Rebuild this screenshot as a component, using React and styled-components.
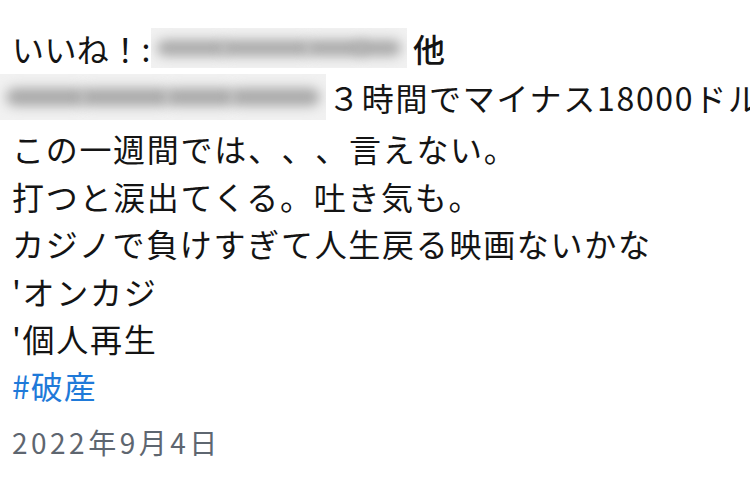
import React from "react";
import styled, { createGlobalStyle } from "styled-components";

const GlobalStyle = createGlobalStyle`
  html, body {
    margin: 0;
    padding: 0;
    background: #ffffff;
  }
  body {
    font-family: "Noto Sans CJK JP", "Noto Sans", sans-serif;
  }
`;

const Page = styled.div`
  width: 750px;
  height: 500px;
  overflow: hidden;
  box-sizing: border-box;
  padding: 24px 0 0 12px;
  color: #141414;
  text-spacing-trim: space-all;
`;

const Line = styled.div`
  display: flex;
  align-items: center;
  height: ${(p) => p.$h || 47}px;
  font-size: 32px;
  letter-spacing: ${(p) => (p.$ls != null ? p.$ls : 1.7)}px;
  white-space: nowrap;
`;

const Strong = styled.span`
  font-weight: 500;
`;

const Redacted = styled.span`
  position: relative;
  display: inline-block;
  flex-shrink: 0;
  width: ${(p) => p.$w}px;
  height: ${(p) => p.$hh || 40}px;
  margin-left: ${(p) => p.$ml || 0}px;
  margin-right: ${(p) => p.$mr || 0}px;
  background: #f1f1f1;
  overflow: hidden;
`;

const Blob = styled.span`
  position: absolute;
  top: 30%;
  height: 40%;
  border-radius: 10px;
  background: #a9a9a9;
  filter: blur(6px);
`;

const Hashtag = styled.div`
  height: 47px;
  display: flex;
  align-items: center;
  font-size: 32px;
  letter-spacing: 1px;
  color: #1f7ad9;
`;

const DateText = styled.div`
  margin-top: 14px;
  height: 40px;
  display: flex;
  align-items: center;
  font-size: 28px;
  letter-spacing: 3.5px;
  color: #5e6670;
`;

const blur1 = [
  { left: 6, width: 70 },
  { left: 70, width: 90 },
  { left: 155, width: 60 },
  { left: 205, width: 45 },
];

const blur2 = [
  { left: 6, width: 80 },
  { left: 80, width: 90 },
  { left: 165, width: 70 },
  { left: 230, width: 90 },
];

const Blurred = ({ blobs, ...rest }) => (
  <Redacted {...rest}>
    {blobs.map((b, i) => (
      <Blob key={i} style={{ left: b.left, width: b.width }} />
    ))}
  </Redacted>
);

const App = () => {
  return (
    <>
      <GlobalStyle />
      <Page>
        <Line $ls={0.4}>
          いいね！:
          <Blurred blobs={blur1} $w={256} $hh={40} $mr={6} />
          <Strong>他</Strong>
        </Line>
        <Line $h={52} style={{ marginLeft: -12 }}>
          <Blurred blobs={blur2} $w={326} $hh={46} $mr={2} />
          ３時間でマイナス18000ドル
        </Line>
        <Line $h={49}>この一週間では、、、言えない。</Line>
        <Line>打つと涙出てくる。吐き気も。</Line>
        <Line $h={48}>カジノで負けすぎて人生戻る映画ないかな</Line>
        <Line>'オンカジ</Line>
        <Line>'個人再生</Line>
        <Hashtag>#破産</Hashtag>
        <DateText>2022年9月4日</DateText>
      </Page>
    </>
  );
};

export default App;
